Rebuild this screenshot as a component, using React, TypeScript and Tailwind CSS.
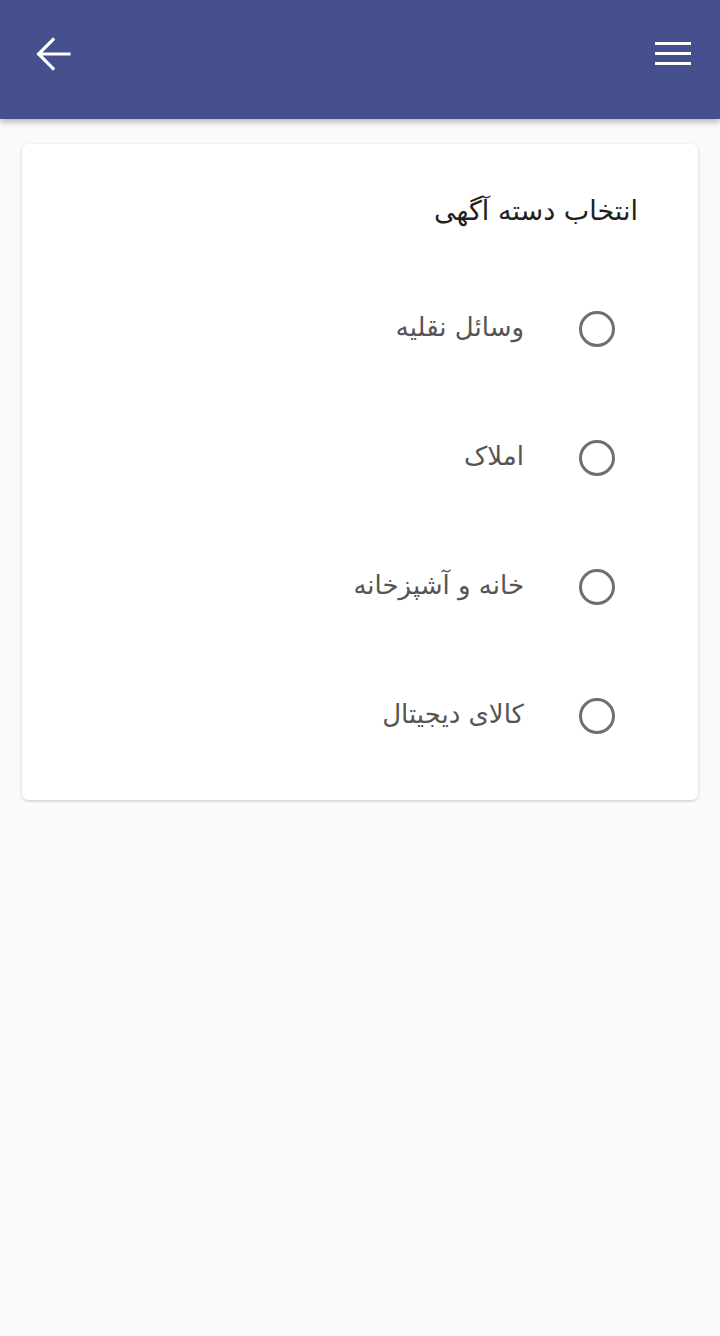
import { useState } from "react";

const options = ["وسائل نقلیه", "املاک", "خانه و آشپزخانه", "کالای دیجیتال"];

export default function App() {
  const [selected, setSelected] = useState<number | null>(null);

  return (
    <div
      className="min-h-[1336px] bg-[#fafafa]"
      style={{ fontFamily: '"DejaVu Sans", "Noto Sans", sans-serif' }}
    >
      {/* header */}
      <header className="relative z-10 flex h-[119px] items-start justify-between bg-[#454f8e] px-[29px] pt-[30px] shadow-[0_3px_6px_rgba(0,0,0,0.28)]">
        <button className="flex h-[48px] w-[48px] items-center justify-center">
          <svg width="48" height="48" viewBox="0 0 24 24" fill="none">
            <path
              d="M20 12H5M12 4.8 4.8 12l7.2 7.2"
              stroke="white"
              strokeWidth="1.6"
              strokeLinecap="square"
            />
          </svg>
        </button>
        <button className="mt-[12px] flex flex-col gap-[7px]">
          <span className="block h-[3px] w-[36px] bg-white" />
          <span className="block h-[3px] w-[36px] bg-white" />
          <span className="block h-[3px] w-[36px] bg-white" />
        </button>
      </header>

      {/* card */}
      <div className="px-[22px] pt-[25px]">
        <div
          dir="rtl"
          className="rounded-[6px] bg-white pb-[20px] pl-[40px] pr-[60px] pt-[47px] shadow-[0_1px_3px_rgba(0,0,0,0.2)]"
        >
          <h2 className="text-[27px] leading-[40px] text-[#212121]">انتخاب دسته آگهی</h2>
          <div className="mt-[33px] flex flex-col">
            {options.map((label, i) => (
              <label
                key={label}
                className="flex h-[129px] cursor-pointer items-center gap-[55px] pr-[23px]"
                onClick={() => setSelected(i)}
              >
                <span className="flex h-[36px] w-[36px] shrink-0 items-center justify-center rounded-full border-[3px] border-[#6f6f6f]">
                  {selected === i && <span className="h-[18px] w-[18px] rounded-full bg-[#454f8e]" />}
                </span>
                <span className="-mt-[4px] text-[26px] leading-[36px] text-[#555555]">{label}</span>
              </label>
            ))}
          </div>
        </div>
      </div>
    </div>
  );
}
